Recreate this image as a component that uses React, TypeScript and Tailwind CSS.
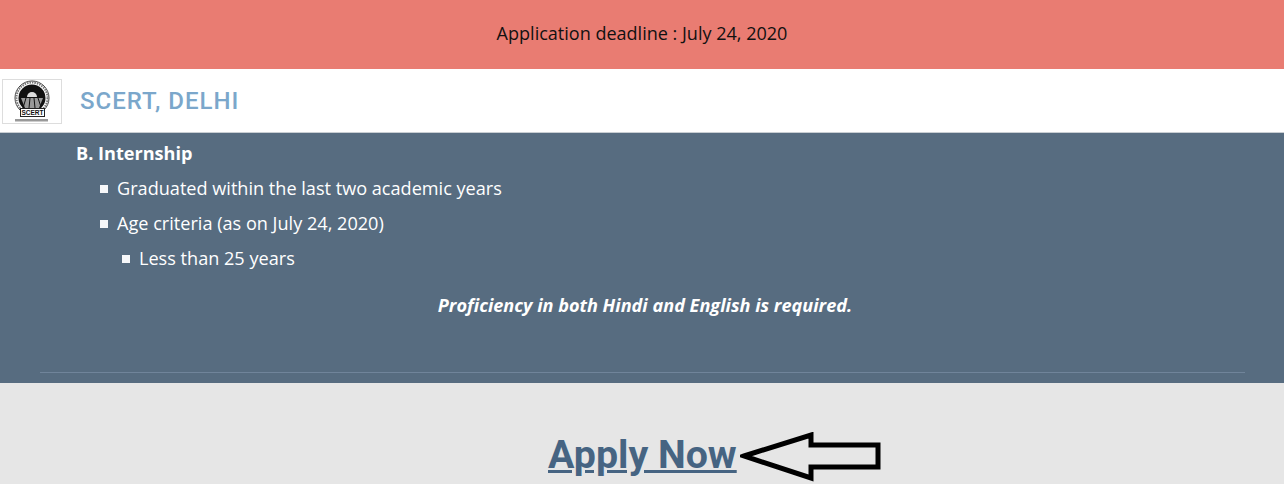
function Logo() {
  return (
    <div className="h-[45px] w-[60px] border border-[#dddddd] bg-white">
      <svg width="58" height="43" viewBox="0 0 58 43">
        <circle cx="29" cy="18" r="17" fill="#fff" stroke="#444" strokeWidth="1" />
        <circle cx="29" cy="18" r="15.5" fill="none" stroke="#777" strokeWidth="2" strokeDasharray="1.5 1" />
        <circle cx="29" cy="18" r="13.5" fill="#111" />
        <path d="M24 17a5 5 0 0 1 10 0z" fill="#ddd" />
        <path d="M18 18h22l-4 10H22z" fill="#999" />
        <path d="M23 18l-3 10M27 18l-1 10M31 18l1 10M35 18l3 9" stroke="#111" strokeWidth="1" />
        <rect x="17.5" y="28.5" width="24" height="8" fill="#fff" stroke="#222" />
        <text x="29.5" y="35" textAnchor="middle" fontFamily="Liberation Sans" fontSize="6.5" fontWeight="700" fill="#111">SCERT</text>
        <rect x="12" y="39" width="33" height="2.5" fill="#999" />
      </svg>
    </div>
  );
}

function Arrow() {
  return (
    <svg width="146" height="52" viewBox="0 0 146 52" className="block">
      <path
        d="M4 24 L71 3 L71 13 L138 13 L138 35 L71 35 L71 46 Z"
        fill="none"
        stroke="#000"
        strokeWidth="5"
        strokeLinejoin="miter"
      />
    </svg>
  );
}

function Bullet({ children, indent }: { children: string; indent: string }) {
  return (
    <li className={`flex h-[35px] items-center ${indent}`}>
      <span className="mr-[9px] h-[8px] w-[8px] bg-white/95" />
      {children}
    </li>
  );
}

export default function App() {
  return (
    <div className="h-[484px] overflow-hidden bg-[#e6e6e6] font-['Open_Sans',sans-serif]">
      <div className="flex h-[69px] items-center justify-center bg-[#e97c72] pb-[2px] text-[18.05px] text-[#111]">
        Application deadline : July 24, 2020
      </div>

      <header className="flex h-[64px] items-center border-b border-[#c9ced3] bg-white pl-[2px] pt-[2px]">
        <Logo />
        <span className="mb-[2px] ml-[18px] font-['Roboto',sans-serif] text-[24px] font-medium tracking-[1px] text-[#7ba7cb]">
          SCERT, DELHI
        </span>
      </header>

      <section className="h-[250px] bg-[#576c80] pl-[40px] pr-[39px] text-[18.13px] text-white">
        <div className="h-[240px] border-b border-[#70849a]">
          <p className="flex h-[42px] items-center pl-[36px] pb-[1px] font-bold">B. Internship</p>
          <ul className="-mt-[4px]">
            <Bullet indent="pl-[60px]">Graduated within the last two academic years</Bullet>
            <Bullet indent="pl-[60px]">Age criteria (as on July 24, 2020)</Bullet>
            <Bullet indent="pl-[82px]">Less than 25 years</Bullet>
          </ul>
          <p className="mt-[16px] pl-[5px] text-center font-bold italic">
            Proficiency in both Hindi and English is required.
          </p>
        </div>
      </section>

      <div className="flex items-start pl-[548px] pt-[50px]">
        <a href="#" className="font-['Roboto',sans-serif] text-[39.3px] leading-[45px] font-bold text-[#466482] underline">
          Apply Now
        </a>
        <div className="-mt-[1px] ml-[3px]">
          <Arrow />
        </div>
      </div>
    </div>
  );
}
